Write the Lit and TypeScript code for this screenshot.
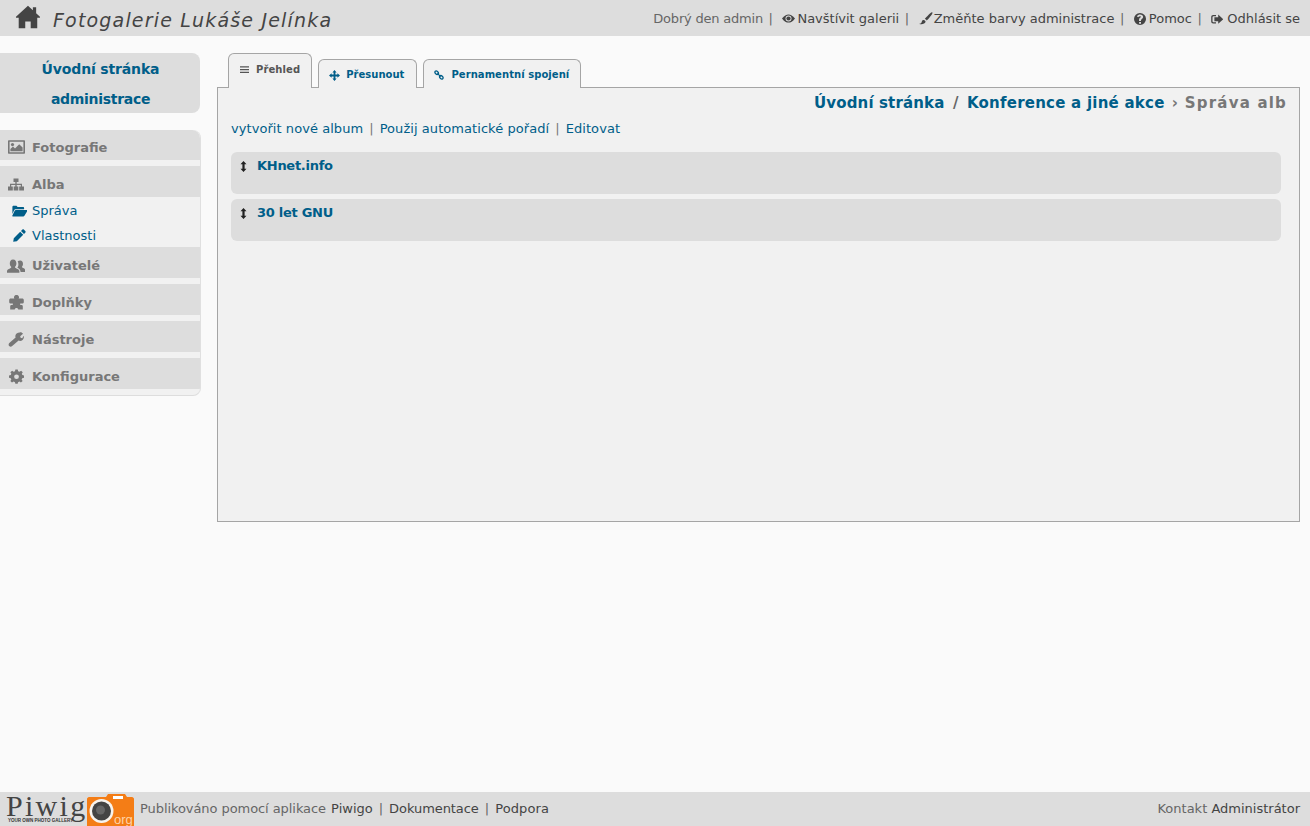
import { LitElement, html, css, svg } from "lit";
import { customElement } from "lit/decorators.js";

const ic = (w: number, h: number, body: unknown, cls = "") =>
  html`<svg class="ic ${cls}" width=${w} height=${h} viewBox="0 0 ${w * 10} ${h * 10}" fill="currentColor">${body}</svg>`;

const icons = {
  home: svg`<path transform="translate(-12,-10) scale(1.09 1.1)" d="M130 15 L20 115 L20 125 L45 125 L45 220 L105 220 L105 160 L155 160 L155 220 L215 220 L215 125 L240 125 L240 115 L205 83 L205 30 L175 30 L175 56 Z"/>`,
  eye: svg`<path d="M0 45C22 15 45 4 65 4S108 15 130 45C108 76 85 86 65 86S22 76 0 45Z"/><circle cx="65" cy="45" r="30" fill="#ddd"/><circle cx="65" cy="45" r="21"/>`,
  brush: svg`<path d="M128 2C120 5 75 45 58 70C68 72 74 78 76 86C100 66 135 20 136 8C136 4 132 1 128 2ZM40 80C28 84 30 100 22 110C12 118 6 118 4 120C30 128 62 118 66 98C66 88 52 76 40 80Z"/>`,
  help: svg`<path fill-rule="evenodd" d="M60 0A60 60 0 1 0 60.1 120A60 60 0 1 0 60 0ZM51 90H70V107H51ZM61 14C82 14 93 27 91 42C89 58 71 58 70 74V80H50V69C51 47 70 47 70 38C70 30 52 28 41 42L29 32C37 20 49 14 61 14Z"/>`,
  logout: svg`<path d="M50 10H22C10 10 2 18 2 30V75C2 87 10 95 22 95H50V82H24C19 82 15 78 15 73V32C15 27 19 23 24 23H50Z"/><path d="M72 6L122 52L72 98V72H34V32H72Z"/>`,
  image: svg`<path fill-rule="evenodd" d="M10 2H160C166 2 170 6 170 12V128C170 134 166 138 160 138H10C4 138 0 134 0 128V12C0 6 4 2 10 2ZM16 18V122H154V18Z"/><circle cx="45" cy="46" r="16"/><path d="M24 112V90L50 66L70 84L112 42L146 76V112Z"/>`,
  sitemap: svg`<path d="M55 5H105V40H87V58H140V85H160V125H112V85H128V71H87V85H103V125H57V85H73V71H32V85H48V125H0V85H20V58H73V40H55Z"/>`,
  folder: svg`<path d="M4 20C4 12 9 8 16 8H45L56 20H110C118 20 121 25 121 30V42H38C28 42 24 46 20 54L4 90Z"/><path d="M38 50H148C154 50 156 55 153 60L126 106C122 112 118 114 112 114H8C3 114 1 110 4 104L28 56C30 52 33 50 38 50Z"/>`,
  pencil: svg`<path d="M92 8C98 2 105 2 110 7L123 20C128 25 128 32 122 38L110 50L80 20ZM72 28L102 58L38 122L2 128L8 92Z"/>`,
  users: svg`<path d="M60 6C84 6 94 26 94 46C94 60 88 72 80 78C78 86 84 90 94 94C110 100 124 106 124 122V138H0V122C0 106 14 100 30 94C40 90 44 86 42 78C34 72 28 60 28 46C28 26 38 6 60 6Z"/><path d="M132 16C150 16 160 32 160 50C160 62 155 71 150 76C149 83 154 86 162 90C174 95 182 102 182 115V130H136C135 112 126 98 104 88C110 80 114 70 114 56C114 42 112 30 106 24C112 19 122 16 132 16Z"/>`,
  puzzle: svg`<path d="M75 0A23 23 0 0 1 96 36H132C142 36 148 42 148 52V70C148 80 140 86 130 86H112V100H126C134 100 138 106 138 114V146H92C92 126 58 126 58 146H12V114C12 106 16 100 24 100H38V86H20C10 86 2 80 2 70V52C2 42 8 36 18 36H54A23 23 0 0 1 75 0Z"/>`,
  wrench: svg`<path d="M118 4C132 2 146 10 150 18L122 42L126 58L142 62L157 38C162 52 158 70 146 80C134 90 118 92 106 86L42 140C32 149 20 148 12 140C4 132 4 120 13 111L76 54C70 38 74 24 86 14C94 8 106 4 118 4Z"/>`,
  cog: svg`<path fill-rule="evenodd" d="M60 5H85L89 24L103 30L120 20L137 37L127 54L133 68L150 72V98L131 102L125 116L136 132L118 150L102 140L88 146L84 165H60L56 146L42 140L25 150L8 133L18 116L12 102L-6 98V72L12 68L18 54L8 37L26 20L42 30L56 24ZM72 60A25 25 0 1 0 72.1 110A25 25 0 1 0 72 60Z" transform="translate(6 0) scale(.96 .9)"/>`,
  bars: svg`<path d="M0 12H90V24H0ZM0 40H90V52H0ZM0 68H90V80H0Z"/>`,
  move: svg`<path d="M55 0L76 26H64V44H84V32L110 55L84 78V66H64V84H76L55 110L34 84H46V66H26V78L0 55L26 32V44H46V26H34Z"/>`,
  link: svg`<g fill="none" stroke="currentColor" stroke-width="13"><ellipse cx="27" cy="27" rx="20" ry="14" transform="rotate(45 27 27)"/><ellipse cx="73" cy="73" rx="20" ry="14" transform="rotate(45 73 73)"/><path d="M34 34L66 66"/></g>`,
  sort: svg`<path d="M35 0L65 32H46V78H65L35 110L5 78H24V32H5Z"/>`,
};

const menu = [
  { label: "Fotografie", icon: ic(17, 14, icons.image), items: [] as { label: string; icon: unknown }[] },
  {
    label: "Alba",
    icon: ic(16, 13, icons.sitemap),
    items: [
      { label: "Správa", icon: ic(15, 12, icons.folder, "side") },
      { label: "Vlastnosti", icon: ic(13, 13, icons.pencil, "side") },
    ],
  },
  { label: "Uživatelé", icon: ic(18, 14, icons.users), items: [] },
  { label: "Doplňky", icon: ic(15, 15, icons.puzzle), items: [] },
  { label: "Nástroje", icon: ic(16, 15, icons.wrench), items: [] },
  { label: "Konfigurace", icon: ic(15, 15, icons.cog), items: [] },
];

@customElement("app-root")
export class AppRoot extends LitElement {
  static styles = css`
    :host {
      display: flex;
      flex-direction: column;
      height: 826px;
      overflow: hidden;
      background: #fafafa;
      color: #666;
      font: 13px/18px "DejaVu Sans", Verdana, sans-serif;
    }
    a { color: #005e89; text-decoration: none; }
    .ic { display: block; flex: none; }
    header {
      flex: none;
      height: 36px;
      background: #ddd;
      display: flex;
      align-items: center;
      justify-content: space-between;
      padding: 0 10px 0 15px;
    }
    .brand { display: flex; align-items: center; gap: 12px; }
    .brand .ic { color: #444; margin-top: -2px; }
    .title {
      font-style: italic;
      font-size: 19px;
      letter-spacing: 1.18px;
      color: #444;
      margin-top: 3px;
    }
    .user { display: flex; align-items: center; white-space: pre; margin-top: 1px; }
    .user > span:first-child { letter-spacing: -.2px; }
    .user a { color: #444; display: flex; align-items: center; gap: 2px; }
    .user a.b { gap: 1px; }
    .user a.w { gap: 3px; }
    .user a.o { gap: 4px; }
    .user .sep { margin: 0 9.5px 0 5.5px; }
    .user .ic { color: #444; }
    .middle { flex: 1; display: flex; align-items: flex-start; min-height: 0; padding-top: 17px; }
    aside { flex: none; width: 200px; margin-right: 17px; }
    .homebox {
      display: block;
      height: 60px;
      background: #ddd;
      border-radius: 0 8px 8px 0;
      text-align: center;
      font-weight: bold;
      font-size: 14px;
      line-height: 30px;
      letter-spacing: -.15px;
      padding: 1px 0 0 1px;
      box-sizing: border-box;
    }
    .homebox span { letter-spacing: -.3px; }
    nav {
      margin-top: 17px;
      width: 201px;
      background: #f1f1f1;
      border-right: 1px solid #e0e0e0;
      border-bottom: 1px solid #ddd;
      border-radius: 0 8px 8px 0;
      padding-bottom: 6px;
      box-sizing: border-box;
      overflow: hidden;
    }
    .mh {
      height: 31px;
      box-sizing: border-box;
      padding-top: 7px;
      background: #ddd;
      display: flex;
      align-items: center;
      font-weight: bold;
      font-size: 13px;
      color: #777;
      margin-bottom: 6px;
    }
    .mh.first { height: 30px; padding-top: 5px; border-radius: 0 8px 0 0; }
    .mh.open, .mh.tail { margin-bottom: 0; }
    .mh .slot { width: 32px; flex: none; display: flex; justify-content: center; box-sizing: border-box; margin-top: -1px; }
    .sub { display: flex; flex-direction: column; height: 50px; }
    .sub a { height: 25px; display: flex; align-items: center; padding-top: 2px; box-sizing: border-box; }
    .sub .slot { width: 32px; display: flex; justify-content: center; padding-left: 6px; box-sizing: border-box; }
    main { flex: none; width: 1083px; }
    .tabs { display: flex; align-items: flex-end; height: 35px; padding-left: 11px; gap: 6px; margin-bottom: -1px; position: relative; z-index: 1; }
    .tab {
      box-sizing: border-box;
      height: 29px;
      border: 1px solid #a5a5a5;
      border-bottom: none;
      border-radius: 6px 6px 0 0;
      background: #f1f1f1;
      display: flex;
      align-items: center;
      font-size: 10px;
      font-weight: bold;
      color: #005e89;
      padding: 2px 12px 0 10px;
      gap: 6px;
      letter-spacing: .02px;
    }
    .tab.long { letter-spacing: .06px; gap: 7px; padding-right: 11px; }
    .tab.on { height: 35px; color: #555; padding: 0 11px 3px 11px; gap: 7px; letter-spacing: .1px; }
    .tab.on .ic { color: #555; }
    .panel {
      box-sizing: border-box;
      height: 435px;
      background: #f1f1f1;
      border: 1px solid #a5a5a5;
      padding: 0 18px 0 13px;
    }
    .crumbs {
      display: flex;
      justify-content: flex-end;
      font-weight: bold;
      font-size: 15px;
      line-height: 20px;
      color: #777;
      padding: 5px 0 0;
      margin-right: -5px;
      white-space: pre;
    }
    .crumbs .c1 { letter-spacing: .14px; }
    .crumbs .c2 { letter-spacing: .24px; }
    .crumbs .c3 { letter-spacing: 1.2px; margin-right: -1px; }
    .crumbs .s1 { margin: 0 8.5px; color: #666; }
    .crumbs .s2 { margin: 0 7px; }
    .actions { margin-top: 7px; display: flex; white-space: pre; letter-spacing: .06px; }
    .actions .sep { margin: 0 6px; color: #777; }
    .albums { margin-top: 14px; display: flex; flex-direction: column; gap: 5px; }
    .album {
      height: 42px;
      box-sizing: border-box;
      background: #ddd;
      border-radius: 6px;
      padding: 5px 8px 5px 9px;
      display: flex;
      align-items: flex-start;
      gap: 10px;
      font-weight: bold;
      letter-spacing: -.28px;
    }
    .album .ic { color: #222; margin-top: 4px; }
    footer {
      flex: none;
      height: 34px;
      background: #ddd;
      display: flex;
      align-items: center;
      justify-content: space-between;
      padding: 0 10px 0 6px;
      white-space: pre;
    }
    footer a { color: #444; }
    .fl { display: flex; align-items: center; }
    .fl > span { letter-spacing: -.07px; }
    .fl .first { margin-left: 1px; letter-spacing: 0; }
    .fl .sep { margin: 0 6px; letter-spacing: 0; }
    .fl .last { letter-spacing: .1px; }
    .logo { position: relative; display: flex; align-items: flex-start; height: 34px; margin-right: 6px; }
    .wordmark {
      width: 81px;
      height: 26px;
      font: 30px/28px "Liberation Serif", serif;
      letter-spacing: 2.3px;
      color: #444;
    }
    .tagline {
      position: absolute;
      left: 2px;
      top: 26px;
      font: bold 4.5px/5px "Liberation Sans", sans-serif;
      color: #333;
      white-space: nowrap;
    }
    .cam { margin-top: 2px; }
    .camt { font: 13px "Liberation Sans", sans-serif; fill: #ffd3a6; }
  `;

  render() {
    return html`
      <header>
        <div class="brand">
          ${ic(26, 24, icons.home)}
          <span class="title">Fotogalerie Lukáše Jelínka</span>
        </div>
        <div class="user">
          <span>Dobrý den admin</span><span class="sep">|</span>
          <a href="#">${ic(13, 9, icons.eye)}Navštívit galerii</a><span class="sep">|</span>
          <a class="b" href="#">${ic(14, 13, icons.brush)}Změňte barvy administrace</a><span class="sep">|</span>
          <a class="w" href="#">${ic(12, 12, icons.help)}Pomoc</a><span class="sep">|</span>
          <a class="o" href="#">${ic(12, 10, icons.logout)}Odhlásit se</a>
        </div>
      </header>
      <div class="middle">
        <aside>
          <a class="homebox" href="#">Úvodní stránka<br /><span>administrace</span></a>
          <nav>
            ${menu.map(
              (m, i) => html`
                <div class="mh ${i === 0 ? "first" : ""} ${m.items.length ? "open" : ""} ${i === 5 ? "tail" : ""}">
                  <span class="slot">${m.icon}</span>${m.label}
                </div>
                ${m.items.length
                  ? html`<div class="sub">
                      ${m.items.map((s) => html`<a href="#"><span class="slot">${s.icon}</span>${s.label}</a>`)}
                    </div>`
                  : ""}
              `
            )}
          </nav>
        </aside>
        <main>
          <div class="tabs">
            <div class="tab on">${ic(9, 9, icons.bars)}Přehled</div>
            <a class="tab" href="#">${ic(11, 11, icons.move)}Přesunout</a>
            <a class="tab long" href="#">${ic(10, 10, icons.link)}Pernamentní spojení</a>
          </div>
          <section class="panel">
            <div class="crumbs">
              <a class="c1" href="#">Úvodní stránka</a><span class="s1">/</span><a class="c2" href="#">Konference a jiné akce</a><span class="s2">›</span><span class="c3">Správa alb</span>
            </div>
            <div class="actions">
              <a href="#">vytvořit nové album</a><span class="sep">|</span><a href="#">Použij automatické pořadí</a><span class="sep">|</span><a href="#">Editovat</a>
            </div>
            <div class="albums">
              <div class="album">${ic(7, 11, icons.sort)}<a href="#">KHnet.info</a></div>
              <div class="album">${ic(7, 11, icons.sort)}<a href="#">30 let GNU</a></div>
            </div>
          </section>
        </main>
      </div>
      <footer>
        <div class="fl">
          <div class="logo">
            <div class="wordmark">Piwig</div>
            <div class="tagline">YOUR OWN PHOTO GALLERY</div>
            <svg class="cam ic" width="47" height="32" viewBox="0 0 47 32">
              <path d="M2 3H19L21 0H38L40 3H45C46 3 47 4 47 5V32H0V5C0 4 1 3 2 3Z" fill="#f47d16" />
              <rect x="26" y="2" width="10" height="3" fill="#fff" />
              <circle cx="14.5" cy="17" r="12" fill="#f7f3ee" />
              <circle cx="14.5" cy="17" r="9.5" fill="#444" />
              <circle cx="13.5" cy="16" r="4.5" fill="#666" />
              <text class="camt" x="27" y="30">org</text>
            </svg>
          </div>
          <span>Publikováno pomocí aplikace <a class="first" href="#">Piwigo</a><span class="sep">|</span><a href="#">Dokumentace</a><span class="sep">|</span><a class="last" href="#">Podpora</a></span>
        </div>
        <span>Kontakt <a href="#">Administrátor</a></span>
      </footer>
    `;
  }
}
